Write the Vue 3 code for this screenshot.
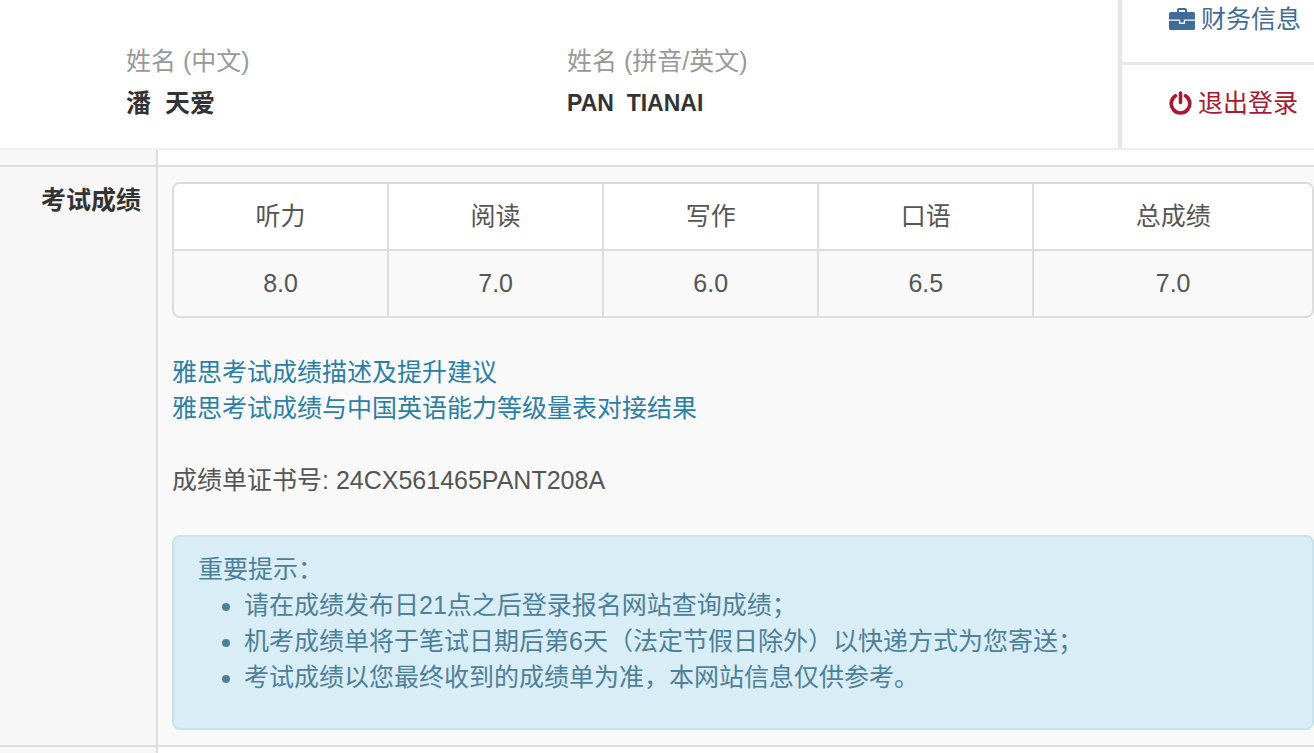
<script setup>
const person = [
  { label: '姓名 (中文)', value: '潘  天爱', latin: false },
  { label: '姓名 (拼音/英文)', value: 'PAN  TIANAI', latin: true },
]
const scores = [
  { name: '听力', value: '8.0' },
  { name: '阅读', value: '7.0' },
  { name: '写作', value: '6.0' },
  { name: '口语', value: '6.5' },
  { name: '总成绩', value: '7.0' },
]
const reports = ['雅思考试成绩描述及提升建议', '雅思考试成绩与中国英语能力等级量表对接结果']
const notices = [
  '请在成绩发布日21点之后登录报名网站查询成绩；',
  '机考成绩单将于笔试日期后第6天（法定节假日除外）以快递方式为您寄送；',
  '考试成绩以您最终收到的成绩单为准，本网站信息仅供参考。',
]
</script>

<template>
  <div class="page">
    <header class="top">
      <dl class="person">
        <div v-for="p in person" :key="p.label">
          <dt>{{ p.label }}</dt>
          <dd :class="{ latin: p.latin }">{{ p.value }}</dd>
        </div>
      </dl>
      <nav class="menu">
        <a class="finance" href="#finance">
          <svg width="26" height="22" viewBox="0 0 26 22" aria-hidden="true">
            <path d="M9 5V2Q9 1 10 1H16Q17 1 17 2V5" fill="none" stroke="currentColor" stroke-width="2" />
            <path d="M1.5 4H24.5Q26 4 26 5.500V11.500H0V5.500Q0 4 1.500 4Z" fill="currentColor" />
            <path d="M0 12.700H10V16H16V12.700H26V20.500Q26 22 24.500 22H1.500Q0 22 0 20.500Z" fill="currentColor" />
            <path d="M11.200 11H14.800V14.500H11.200Z" fill="currentColor" />
          </svg>
          财务信息
        </a>
        <a class="logout" href="#logout">
          <svg width="23" height="24" viewBox="0 0 23 24" aria-hidden="true">
            <path d="M6.500 4.800A9.300 9.300 0 1 0 16.500 4.800M11.500 2V11.500" fill="none" stroke="currentColor" stroke-width="3.600" stroke-linecap="round" />
          </svg>
          退出登录
        </a>
      </nav>
    </header>

    <div class="row stub"><div class="side"></div><div class="main"></div></div>
    <section class="row result">
      <h2 class="side">考试成绩</h2>
      <div class="main">
        <table class="scores">
          <thead>
            <tr><th v-for="s in scores" :key="s.name" scope="col">{{ s.name }}</th></tr>
          </thead>
          <tbody>
            <tr><td v-for="s in scores" :key="s.name">{{ s.value }}</td></tr>
          </tbody>
        </table>
        <ul class="reports">
          <li v-for="r in reports" :key="r"><a href="#report">{{ r }}</a></li>
        </ul>
        <p class="certificate">成绩单证书号: 24CX561465PANT208A</p>
        <div class="notice">
          <p>重要提示：</p>
          <ul>
            <li v-for="n in notices" :key="n">{{ n }}</li>
          </ul>
        </div>
      </div>
    </section>
    <div class="row rest"><div class="side"></div><div class="main"></div></div>
  </div>
</template>

<style>
html, body { margin: 0; height: 100%; overflow: hidden; }
#app { height: 100%; }
</style>

<style scoped>
* { box-sizing: border-box; }
.page {
  min-height: 100%;
  display: flex;
  flex-direction: column;
  background: #fff;
  color: #555;
  font: 25px/36px "Liberation Sans", "Noto Sans CJK SC", sans-serif;
}
dl, dd, h2, p, ul { margin: 0; padding: 0; }
a { text-decoration: none; }
.top {
  display: flex;
  border-bottom: 2px solid #eee;
}
.person {
  flex: 1;
  display: grid;
  grid-template-columns: 1fr 1fr;
  padding: 40px 110px 24px 126px;
  line-height: 42px;
}
dt { color: #999; }
dd { color: #333; font-weight: bold; white-space: pre; }
dd.latin { font-size: 23px; }
.menu {
  width: 196px;
  border-left: 4px solid #e7e7e7;
}
.menu a {
  display: flex;
  align-items: center;
  gap: 6px;
  padding-left: 47px;
  white-space: nowrap;
}
.finance {
  color: #3f6c99;
  padding-top: 1px;
  padding-bottom: 25px;
  border-bottom: 3px solid #e7e7e7;
}
.logout { color: #a9182f; padding-top: 20px; }
.row {
  display: grid;
  grid-template-columns: 158px 1fr;
}
.side {
  background: #f7f7f7;
  border-right: 2px solid #ddd;
}
.stub { height: 15px; }
.rest { flex: 1; }
.result {
  border-top: 2px solid #ddd;
  border-bottom: 2px solid #ddd;
  background: #f9f9f9;
}
.result .side {
  padding: 15px 15px 0 0;
  text-align: right;
  font-size: 25px;
  color: #333;
}
.result .main { padding: 15px 0 15px 14px; }
.scores {
  width: 100%;
  table-layout: fixed;
  border-collapse: separate;
  border-spacing: 0;
  border: 2px solid #ddd;
  border-radius: 8px;
  overflow: hidden;
}
.scores th, .scores td {
  padding: 14px 0 15px;
  font-weight: normal;
  text-align: center;
  border-right: 2px solid #ddd;
}
.scores th { width: 18.9%; background: #fff; border-bottom: 2px solid #ddd; }
.scores th:last-child { width: auto; }
.scores th:last-child, .scores td:last-child { border-right: 0; }
.reports { padding-top: 36px; list-style: none; }
.reports a { color: #2a7fa8; }
.certificate { padding: 36px 0 37px; }
.notice {
  padding: 14px 24px 33px;
  border: 2px solid #c9e3ec;
  border-radius: 8px;
  background: #d9edf7;
  color: #4d8099;
}
.notice ul { padding-left: 46px; }
</style>
